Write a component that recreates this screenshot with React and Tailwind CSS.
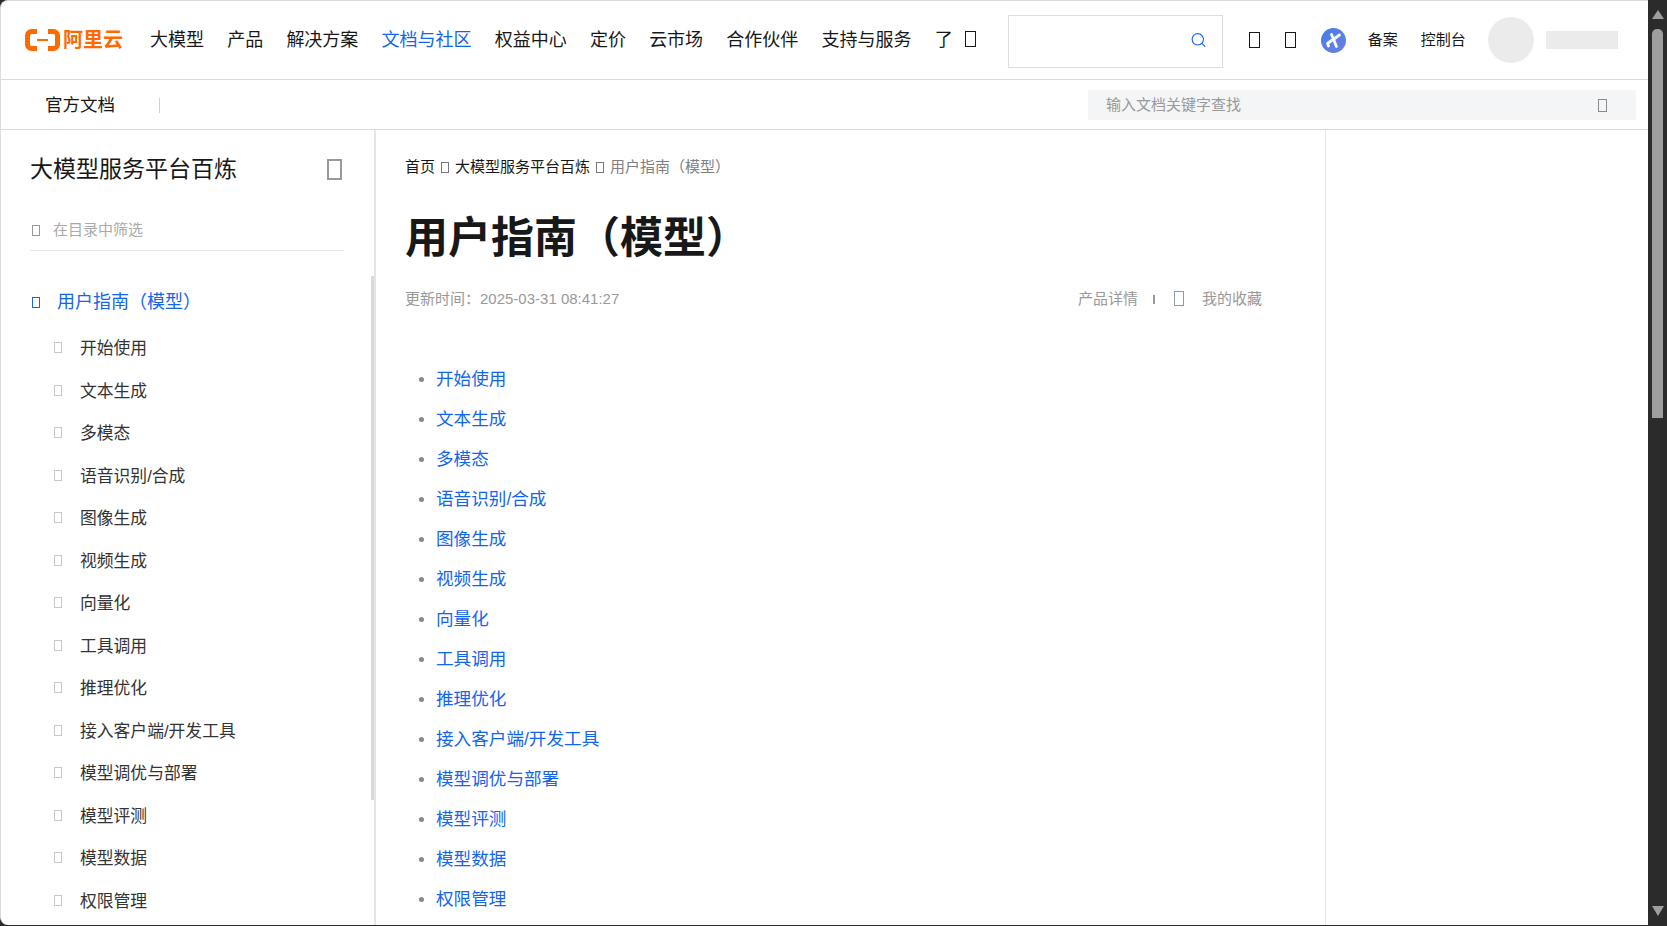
import { Search } from 'lucide-react'

const navItems = ['大模型', '产品', '解决方案', '文档与社区', '权益中心', '定价', '云市场', '合作伙伴', '支持与服务', '了']
const guideItems = [
  '开始使用',
  '文本生成',
  '多模态',
  '语音识别/合成',
  '图像生成',
  '视频生成',
  '向量化',
  '工具调用',
  '推理优化',
  '接入客户端/开发工具',
  '模型调优与部署',
  '模型评测',
  '模型数据',
  '权限管理',
]

// the page's icon font is missing, so every icon shows as an empty box
function Tofu({ className }) {
  return <span className={`block shrink-0 border ${className}`} />
}

function Logo() {
  return (
    <div className="flex w-[98px] shrink-0 items-center gap-[3px]">
      <svg width="35" height="22" viewBox="0 0 35 22" fill="none" className="shrink-0">
        <path d="M12 2.5H6.5A4 4 0 0 0 2.5 6.500V15.500A4 4 0 0 0 6.500 19.500H12" stroke="#ff6a00" strokeWidth="5" strokeLinejoin="round" />
        <path d="M23 2.500H28.500A4 4 0 0 1 32.500 6.500V15.500A4 4 0 0 1 28.500 19.500H23" stroke="#ff6a00" strokeWidth="5" strokeLinejoin="round" />
        <rect x="12" y="10" width="11" height="2" fill="#ff6a00" />
      </svg>
      <span className="text-[20px] leading-none font-bold whitespace-nowrap text-[#ff6a00]">阿里云</span>
    </div>
  )
}

function Header() {
  return (
    <header className="flex h-[79px] shrink-0 items-center border-b border-[#dcdcdc] pl-[24px]">
      <Logo />
      <nav className="ml-[27px] flex items-center gap-[23.200px] text-[18px] text-[#181818]">
        {navItems.map((item) => (
          <span key={item} className={item === '文档与社区' ? 'text-[#1366ec]' : ''}>
            {item}
          </span>
        ))}
      </nav>
      <Tofu className="ml-[12px] h-[16px] w-[11px] -translate-y-[1px] border-[1.500px] border-[#181818]" />
      <div className="mt-[2px] ml-[32px] flex h-[53px] w-[215px] shrink-0 items-center justify-end border border-[#dddddd] pr-[15px]">
        <Search size={17} strokeWidth={1.6} className="-translate-y-[1.500px] text-[#1366ec]" />
      </div>
      <Tofu className="ml-[26px] h-[16px] w-[11px] border-[1.500px] border-[#181818]" />
      <Tofu className="ml-[25px] h-[16px] w-[11px] border-[1.500px] border-[#181818]" />
      <div className="ml-[25px] flex h-[25px] w-[25px] shrink-0 items-center justify-center rounded-full bg-gradient-to-br from-[#3f7fe8] to-[#6f7fe0]">
        <svg width="17" height="17" viewBox="0 0 17 17">
          <path d="M14.500 3 L2.500 11.500 M6.500 2.500 L11.500 14.500 M2.500 11.500 L3.500 14" stroke="#fff" strokeWidth="2.800" strokeLinecap="round" fill="none" />
        </svg>
      </div>
      <span className="ml-[22px] text-[15px] whitespace-nowrap text-[#181818]">备案</span>
      <span className="ml-[23px] text-[15px] whitespace-nowrap text-[#181818]">控制台</span>
      <div className="ml-[22px] h-[46px] w-[46px] shrink-0 rounded-full bg-[#ebebeb]" />
      <div className="ml-[12px] h-[18px] w-[72px] shrink-0 bg-[#ebebeb]" />
    </header>
  )
}

function SubNav() {
  return (
    <div className="flex h-[50px] shrink-0 items-center border-b border-[#dcdcdc] pt-[1px] pl-[44px]">
      <span className="text-[17.500px] text-[#181818]">官方文档</span>
      <div className="ml-[44px] h-[15px] w-px bg-[#d0d0d0]" />
      <div className="mr-[12px] ml-auto flex h-[30px] w-[548px] items-center justify-between bg-[#f4f5f6] pr-[29px] pl-[18px]">
        <span className="text-[15px] text-[#999999]">输入文档关键字查找</span>
        <Tofu className="h-[13px] w-[9px] border-[#8a8a8a]" />
      </div>
    </div>
  )
}

function Sidebar() {
  return (
    <aside className="relative w-[375px] shrink-0 overflow-hidden border-r-2 border-[#e5e5e5] pl-[29px]">
      <div className="mt-[24px] flex h-[30px] w-[314px] items-center justify-between pr-[2px]">
        <span className="text-[23px] text-[#181818]">大模型服务平台百炼</span>
        <Tofu className="h-[21px] w-[15px] border-2 border-[#999999]" />
      </div>
      <div className="mt-[26px] flex h-[41px] w-[314px] items-center border-b border-[#e5e5e5] pl-[2px]">
        <Tofu className="h-[11px] w-[8px] border-[#999999]" />
        <span className="ml-[13px] text-[15px] text-[#aaaaaa]">在目录中筛选</span>
      </div>
      <div className="mt-[29px] flex h-[44px] items-center pl-[2px]">
        <Tofu className="h-[11px] w-[8px] border-[#1366ec]" />
        <span className="ml-[17px] text-[18px] text-[#1366ec]">用户指南（模型）</span>
      </div>
      <ul className="mt-[3.500px] pl-[24px]">
        {guideItems.map((item) => (
          <li key={item} className="flex h-[42.500px] items-center">
            <Tofu className="h-[11px] w-[8px] -translate-y-[1px] border-[#c8c8c8]" />
            <span className="ml-[18px] text-[16.800px] text-[#333333]">{item}</span>
          </li>
        ))}
      </ul>
      <div className="absolute top-[146px] right-0 h-[524px] w-[3px] bg-[#d9d9d9]" />
    </aside>
  )
}

function Content() {
  return (
    <main className="w-[950px] shrink-0 overflow-hidden border-r border-[#e8e8e8] pl-[29px]">
      <div className="mt-[25px] flex h-[24px] items-center text-[15px] text-[#181818]">
        <span>首页</span>
        <Tofu className="mx-[6px] h-[11px] w-[8px] border-[#777777]" />
        <span>大模型服务平台百炼</span>
        <Tofu className="mx-[6px] h-[11px] w-[8px] border-[#777777]" />
        <span className="text-[#808080]">用户指南（模型）</span>
      </div>
      <h1 className="mt-[29px] flex h-[60px] items-center text-[43px] font-bold text-[#181818]">用户指南（模型）</h1>
      <div className="mt-[19px] flex h-[24px] w-[857px] items-center justify-between text-[15px] text-[#999999]">
        <span>更新时间：2025-03-31 08:41:27</span>
        <div className="flex items-center">
          <span>产品详情</span>
          <div className="ml-[15px] h-[9px] w-[2px] bg-[#999999]" />
          <Tofu className="ml-[19px] h-[15px] w-[10px] -translate-y-[1px] border-[#8f9aa8]" />
          <span className="ml-[18px]">我的收藏</span>
        </div>
      </div>
      <ul className="mt-[48px]">
        {guideItems.map((item) => (
          <li key={item} className="flex h-[40px] items-center">
            <span className="ml-[14px] h-[5px] w-[5px] shrink-0 rounded-full bg-[#888888]" />
            <a href="#" className="ml-[12px] text-[17.600px] text-[#1366ec]">
              {item}
            </a>
          </li>
        ))}
      </ul>
    </main>
  )
}

function BrowserScrollbar() {
  return (
    <div className="flex h-full w-[19px] shrink-0 flex-col items-center">
      <div className="mt-[10px] h-0 w-0 border-x-[6px] border-b-[9px] border-x-transparent border-b-[#9e9e9e]" />
      <div className="mt-[10px] h-[389px] w-[11px] rounded-t-[5px] bg-[#9e9e9e]" />
      <div className="mt-auto mb-[10px] h-0 w-0 border-x-[6px] border-t-[10px] border-x-transparent border-t-[#9e9e9e]" />
    </div>
  )
}

export default function App() {
  return (
    <div
      className="flex h-[926px] w-[1667px] overflow-hidden bg-[#2b2b2b]"
      style={{ fontFamily: '"Liberation Sans", "Noto Sans CJK SC", sans-serif' }}
    >
      <div className="flex h-[925px] w-[1648px] shrink-0 flex-col overflow-hidden rounded-l-[8px] border-t border-l border-[#dcdcdc] bg-white">
        <Header />
        <SubNav />
        <div className="flex min-h-0 flex-1">
          <Sidebar />
          <Content />
        </div>
      </div>
      <BrowserScrollbar />
    </div>
  )
}
